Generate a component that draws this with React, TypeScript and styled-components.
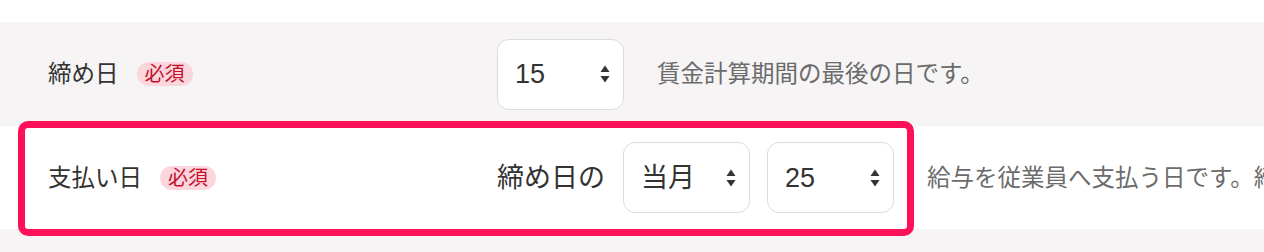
import React from "react";
import styled, { createGlobalStyle } from "styled-components";

const GlobalStyle = createGlobalStyle`
  html, body {
    margin: 0;
    padding: 0;
    background: #ffffff;
    overflow: hidden;
  }
  body {
    font-family: "Liberation Sans", "Noto Sans CJK JP", sans-serif;
    color: #333333;
  }
`;

const Page = styled.div`
  padding-top: 22px;
  width: 1264px;
  height: 230px;
  overflow: hidden;
`;

const Row = styled.div<{ $bg: string; $h: number }>`
  position: relative;
  display: flex;
  align-items: center;
  height: ${(p) => p.$h}px;
  background: ${(p) => p.$bg};
  padding-left: 48px;
  white-space: nowrap;
`;

const LabelCell = styled.div`
  display: flex;
  align-items: center;
  gap: 18px;
  width: 449px;
  flex-shrink: 0;
`;

const Label = styled.span`
  font-size: 23.5px;
  line-height: 32px;
  color: #333333;
`;

const Badge = styled.span`
  display: inline-flex;
  align-items: center;
  height: 24px;
  padding: 0 8px;
  border-radius: 12px;
  background: #fbd6dc;
  color: #c4102d;
  font-size: 20px;
  line-height: 24px;
`;

const Field = styled.div`
  display: flex;
  align-items: center;
  gap: 17px;
  flex-shrink: 0;
`;

const Prefix = styled.span`
  font-size: 27px;
  line-height: 36px;
  color: #333333;
  margin-right: 1px;
`;

const SelectWrap = styled.div`
  position: relative;
  width: 127px;
  height: 71px;
`;

const NativeSelect = styled.select`
  appearance: none;
  -webkit-appearance: none;
  box-sizing: border-box;
  width: 100%;
  height: 100%;
  margin: 0;
  padding: 0 0 0 17px;
  border: 1.5px solid #dddcdc;
  border-radius: 12px;
  background: #ffffff;
  font-family: "Liberation Sans", "Noto Sans CJK JP", sans-serif;
  font-size: 27px;
  color: #333333;
  outline: none;
`;

const Arrow = styled.svg`
  position: absolute;
  right: 14px;
  top: 50%;
  width: 10px;
  height: 18px;
  transform: translateY(-50%);
  pointer-events: none;
`;

const Description = styled.span`
  margin-left: 33px;
  font-size: 23.5px;
  line-height: 32px;
  color: #6b6b6b;
  white-space: nowrap;
`;

const Highlight = styled.div`
  position: absolute;
  left: 18px;
  top: -5px;
  width: 896px;
  bottom: -7px;
  box-sizing: border-box;
  border: 7px solid #fe1158;
  border-radius: 10px;
  pointer-events: none;
  z-index: 2;
`;

type SelectProps = { value: string; options: string[] };

const Select: React.FC<SelectProps> = ({ value, options }) => (
  <SelectWrap>
    <NativeSelect defaultValue={value}>
      {options.map((o) => (
        <option key={o} value={o}>
          {o}
        </option>
      ))}
    </NativeSelect>
    <Arrow viewBox="0 0 10 18" aria-hidden="true">
      <path d="M5 0.5 L9.5 7 L0.5 7 Z" fill="#333333" />
      <path d="M5 17.5 L9.5 11 L0.5 11 Z" fill="#333333" />
    </Arrow>
  </SelectWrap>
);

const days = Array.from({ length: 31 }, (_, i) => String(i + 1));

export default function App() {
  return (
    <>
      <GlobalStyle />
      <Page>
        <Row $bg="#f6f4f5" $h={104}>
          <LabelCell>
            <Label>締め日</Label>
            <Badge>必須</Badge>
          </LabelCell>
          <Field>
            <Select value="15" options={days} />
          </Field>
          <Description>賃金計算期間の最後の日です。</Description>
        </Row>
        <Row $bg="#ffffff" $h={103}>
          <LabelCell>
            <Label>支払い日</Label>
            <Badge>必須</Badge>
          </LabelCell>
          <Field>
            <Prefix>締め日の</Prefix>
            <Select value="当月" options={["当月", "翌月", "翌々月"]} />
            <Select value="25" options={days} />
          </Field>
          <Description>給与を従業員へ支払う日です。締め日より後の日付を指定してください。</Description>
          <Highlight />
        </Row>
        <Row $bg="#f6f4f5" $h={60} />
      </Page>
    </>
  );
}
